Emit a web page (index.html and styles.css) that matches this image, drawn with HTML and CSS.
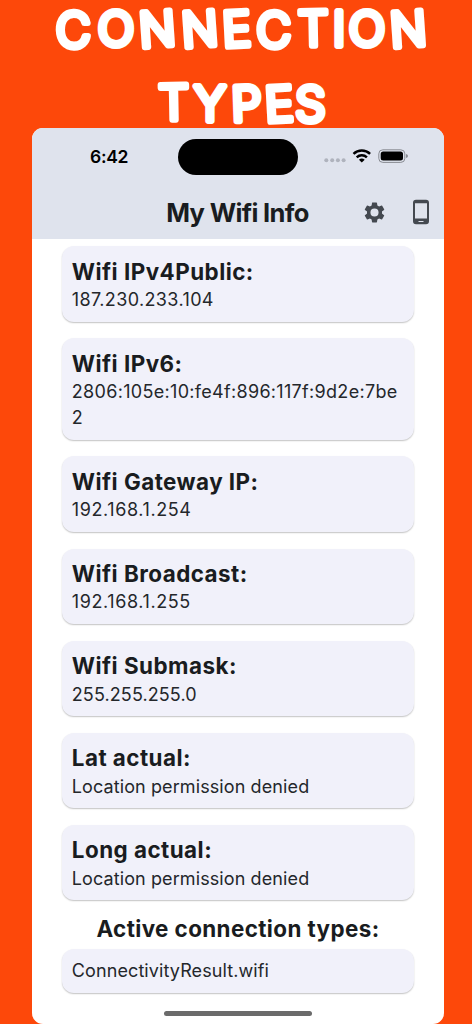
FILE: index.html
```html
<!DOCTYPE html>
<html lang="en">
<head>
<meta charset="utf-8">
<title>My Wifi Info</title>
<link rel="stylesheet" href="styles.css">
</head>
<body>
<svg class="headline" width="472" height="140" viewBox="0 0 472 140">
  <text y="47.5 46 47.5 47.5 47 47.5 46 46 46 47.5" x="73.5 116 158.5 201 237.5 274 313.5 339 367 409.5" rotate="-1 0 -4 -4 -3 -1 -1 0 0 -4">CONNECTION</text>
  <text y="120 121 121.5 122 120.5" x="174 210 247 280 310.5" rotate="-1 0 -2 -3 0">TYPES</text>
</svg>
<main class="phone">
  <header class="top">
    <div class="status">
      <span class="time">6:42</span>
      <span class="island"></span>
      <svg class="signals" width="86" height="20" viewBox="0 0 86 20">
        <g fill="#afb3bd"><circle cx="4.3" cy="13.3" r="2"/><circle cx="10.2" cy="13.3" r="2"/><circle cx="15.9" cy="13.3" r="2"/><circle cx="21.6" cy="13.3" r="2"/></g>
        <g fill="none" stroke="#000" stroke-width="2.5"><path d="M31.5 6.8a12.2 12.2 0 0 1 16.6 0"/><path d="M34.7 10.3a7.5 7.5 0 0 1 10.2 0"/></g>
        <path d="M36.9 12.7a4.3 4.3 0 0 1 5.8 0l-2.9 2.7z"/>
        <rect x="56.8" y="2.8" width="26" height="12.6" rx="4" fill="none" stroke="#888b92"/>
        <rect x="58.7" y="4.6" width="22.3" height="9" rx="2.5"/>
        <path d="M84 7q2 .4 2 2t-2 2z" fill="#888b92"/>
      </svg>
    </div>
    <div class="bar">
      <h1>My Wifi Info</h1>
      <div class="actions">
        <svg width="25" height="25" viewBox="0 0 24 24" fill="#444950"><path d="M19.14 12.94c.04-.3.06-.61.06-.94 0-.32-.02-.64-.07-.94l2.03-1.58a.49.49 0 0 0 .12-.61l-1.92-3.32a.488.488 0 0 0-.59-.22l-2.39.96c-.5-.38-1.03-.7-1.62-.94l-.36-2.54a.484.484 0 0 0-.48-.41h-3.84c-.24 0-.43.17-.47.41l-.36 2.54c-.59.24-1.13.57-1.62.94l-2.39-.96a.49.49 0 0 0-.59.22L2.74 8.87c-.12.21-.08.47.12.61l2.03 1.58c-.05.3-.09.63-.09.94s.02.64.07.94l-2.03 1.58a.49.49 0 0 0-.12.61l1.92 3.32c.12.22.37.29.59.22l2.39-.96c.5.38 1.03.7 1.62.94l.36 2.54c.05.24.24.41.48.41h3.84c.24 0 .44-.17.47-.41l.36-2.54c.59-.24 1.13-.56 1.62-.94l2.39.96c.22.08.47 0 .59-.22l1.92-3.32a.49.49 0 0 0-.12-.61zM12 15.9a3.9 3.9 0 1 1 0-7.8 3.9 3.9 0 0 1 0 7.8z"/></svg>
        <svg width="18" height="26" viewBox="0 0 18 26"><path fill="#444950" fill-rule="evenodd" d="M4 .7h10a3 3 0 0 1 3 3v18.6a3 3 0 0 1-3 3H4a3 3 0 0 1-3-3V3.7a3 3 0 0 1 3-3zM3 4.2v15.2h12V4.2zM6.5 22v1h5v-1z"/></svg>
      </div>
    </div>
  </header>
  <div class="list">
    <section class="card"><h2>Wifi IPv4Public:</h2><p class="public">187.230.233.104</p></section>
    <section class="card"><h2>Wifi IPv6:</h2><p class="v6">2806:105e:10:fe4f:896:117f:9d2e:7be2</p></section>
    <section class="card"><h2>Wifi Gateway IP:</h2><p class="address">192.168.1.254</p></section>
    <section class="card"><h2>Wifi Broadcast:</h2><p class="address">192.168.1.255</p></section>
    <section class="card"><h2>Wifi Submask:</h2><p>255.255.255.0</p></section>
    <section class="card"><h2>Lat actual:</h2><p>Location permission denied</p></section>
    <section class="card"><h2>Long actual:</h2><p>Location permission denied</p></section>
  </div>
  <h2 class="types">Active connection types:</h2>
  <section class="card result"><p>ConnectivityResult.wifi</p></section>
  <div class="home"></div>
</main>
</body>
</html>
```
FILE: styles.css
```css
* { box-sizing: border-box; margin: 0; padding: 0; }
body {
  width: 472px;
  height: 1024px;
  overflow: hidden;
  background: #fd480a;
  font-family: Inter, "Liberation Sans", sans-serif;
  color: #191c20;
}
.headline { display: block; margin-bottom: -12px; }
.headline text {
  font-size: 48px;
  font-weight: 300;
  text-anchor: middle;
  fill: #fff;
  stroke: #fff;
  stroke-width: 6px;
  stroke-linejoin: round;
}
.phone {
  width: 412px;
  height: 895.5px;
  margin-left: 32px;
  background: #fff;
  border-radius: 11px;
  overflow: hidden;
}
.top { height: 111px; background: #dfe3ed; }
.status {
  height: 57px;
  display: grid;
  grid-template-columns: 146px 120px 1fr;
  align-items: center;
}
.time { padding-left: 58px; font-size: 17.5px; font-weight: 600; color: #000; letter-spacing: -.3px; }
.island { height: 36px; border-radius: 18px; background: #000; }
.signals { margin-left: 24px; }
.bar {
  height: 54px;
  display: grid;
  grid-template-columns: 1fr 82px;
  align-items: center;
}
h1 { padding-left: 81px; text-align: center; font-size: 25.5px; font-weight: 700; letter-spacing: -.65px; white-space: nowrap; }
.actions { display: flex; align-items: center; gap: 25px; }
.list { padding: 7.2px 30.3px 0; display: flex; flex-direction: column; gap: 16.6px; }
.card {
  padding: 9.5px 9.5px 8.5px;
  background: #f1f1fa;
  border-radius: 12px;
  box-shadow: 0 1px 1.5px rgba(0, 0, 0, .24);
}
h2 { font-size: 22.4px; font-weight: 700; line-height: 31.4px; letter-spacing: .47px; white-space: nowrap; }
.card p { font-size: 18px; line-height: 26.1px; letter-spacing: .1px; overflow-wrap: anywhere; color: #24272b; }
.card .public { letter-spacing: .37px; }
.card .v6 { letter-spacing: .31px; margin-right: -3px; }
.card .address { letter-spacing: .6px; }
.types { margin-top: 12.8px; text-align: center; letter-spacing: .4px; }
.result { margin: 4px 30.3px 0; }
.home { width: 148px; height: 5px; margin: 18px auto 0; border-radius: 3px; background: #6b6b6b; }
```
